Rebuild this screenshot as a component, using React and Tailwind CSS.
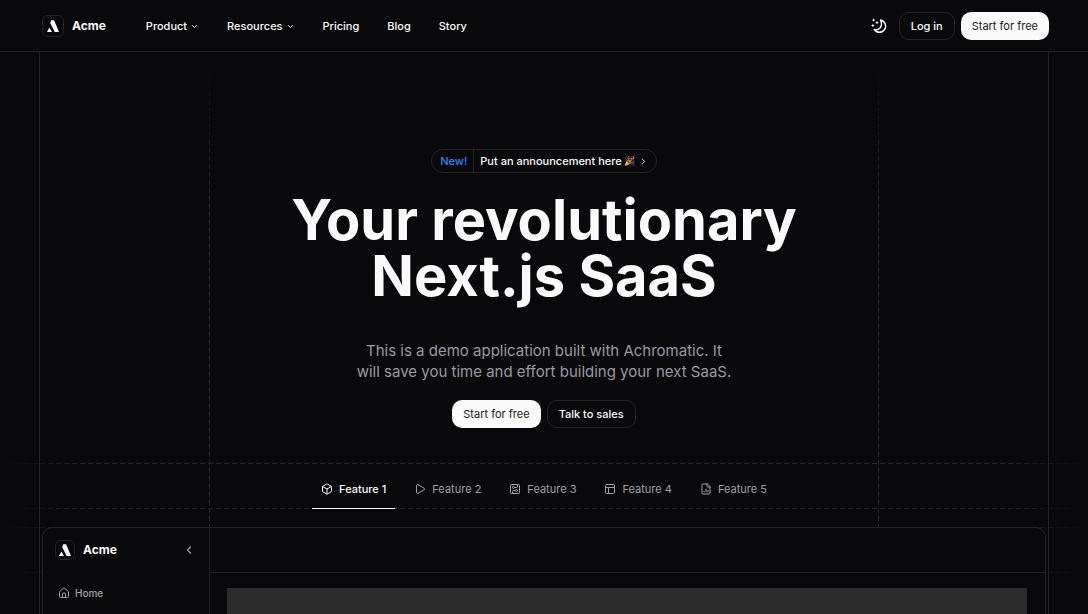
import {
  Box,
  ChevronDown,
  ChevronLeft,
  ChevronRight,
  CircuitBoard,
  FileChartColumn,
  House,
  Layout,
  Play,
} from "lucide-react";

// Navbar links - Section
const navLinks = [
  { label: "Product", hasMenu: true },
  { label: "Resources", hasMenu: true },
  { label: "Pricing" },
  { label: "Blog" },
  { label: "Story" },
];

// Hero tabs - Section
const features = [
  { label: "Feature 1", icon: Box, active: true },
  { label: "Feature 2", icon: Play },
  { label: "Feature 3", icon: CircuitBoard },
  { label: "Feature 4", icon: Layout },
  { label: "Feature 5", icon: FileChartColumn },
];

function Logo({ className }) {
  return (
    <span className="flex items-center">
      <span
        className={`flex items-center justify-center rounded-md border border-[#242427] ${className}`}
      >
        <svg viewBox="0 0 14 14" className="size-[14px]" fill="#fafafa">
          <path d="M5.2 1.2h2.9L13 13H8.7L4.2 4z" />
          <path d="M3.3 8.6 6 13H1z" />
        </svg>
      </span>
      <span className="ml-2 text-xs font-bold">Acme</span>
    </span>
  );
}

// Moon with three stars, toggles the theme
function ThemeIcon() {
  return (
    <svg
      viewBox="0 0 16 16"
      className="size-4"
      fill="none"
      stroke="#fafafa"
      strokeWidth="1.4"
      strokeLinecap="round"
      strokeLinejoin="round"
    >
      <path d="M9.4 2a6.2 6.2 0 1 1-6.2 9.500c3.400.9 6.500-.9 7.100-4 .4-2-.1-4-.9-5.500z" />
      <path strokeWidth="1" d="M2.600 1.200v1.800M1.700 2.100h1.800M1.900 6.600v1.800M1 7.500h1.800M6 3.700v1.800M5.100 4.600h1.800" />
    </svg>
  );
}

// Dashed guide line, fading out at both ends
function DashedLine() {
  return (
    <div className="h-px w-full bg-[repeating-linear-gradient(90deg,#27272a_0_5px,transparent_5px_8px)] [mask-image:linear-gradient(90deg,transparent,black_8%,black_92%,transparent)]" />
  );
}

function Navbar() {
  return (
    <header className="border-b border-[#1f1f22]">
      <div className="mx-[39px] flex h-[51px] items-center pt-px pl-[3px]">
        <a href="#" aria-label="Acme">
          <Logo className="size-[22px]" />
        </a>
        <nav className="ml-10 flex items-center gap-7 text-[11px] leading-4 font-medium">
          {navLinks.map((link) => (
            <a key={link.label} href="#" className="flex items-center gap-[3px]">
              {link.label}
              {link.hasMenu && <ChevronDown size={9} strokeWidth={2.5} />}
            </a>
          ))}
        </nav>
        <div className="ml-auto flex items-center gap-[6px] text-[11px] leading-4">
          <button type="button" aria-label="Toggle theme" className="mr-[6px]">
            <ThemeIcon />
          </button>
          <button type="button" className="h-7 rounded-[10px] border border-[#242427] px-[11px] font-medium">
            Log in
          </button>
          <button type="button" className="h-7 rounded-[10px] bg-[#fafafa] px-[11px] text-[#18181b]">
            Start for free
          </button>
        </div>
      </div>
    </header>
  );
}

function Hero() {
  return (
    <section className="flex flex-col items-center pt-[97px] pb-[35px] text-center">
      <a
        href="#"
        className="flex h-6 items-center rounded-full border border-[#242427] px-2 text-[11px] leading-4 font-medium"
      >
        <span className="text-[#3b82f6]">New!</span>
        <span className="mx-[6px] h-[22px] w-px bg-[#242427]" />
        Put an announcement here
        <span className="ml-[2px] text-[9px]">🎉</span>
        <ChevronRight size={9} strokeWidth={2.5} className="ml-1" />
      </a>
      <h1 className="mt-[19px] text-[56px] leading-[56px] font-bold">
        Your revolutionary
        <br />
        Next.js SaaS
      </h1>
      <p className="mt-9 text-[15px] leading-[21px] text-[#9a9aa2]">
        This is a demo application built with Achromatic. It
        <br />
        will save you time and effort building your next SaaS.
      </p>
      <div className="mt-[18px] flex gap-[6px] text-[11px] leading-4">
        <button type="button" className="h-7 rounded-[10px] bg-[#fafafa] px-[11px] text-[#18181b]">
          Start for free
        </button>
        <button type="button" className="h-7 rounded-[10px] border border-[#242427] px-[11px] font-medium">
          Talk to sales
        </button>
      </div>
    </section>
  );
}

function FeatureTabs() {
  return (
    <>
      <DashedLine />
      <div role="tablist" className="flex h-[44px] justify-center gap-[10px]">
        {features.map(({ label, icon: Icon, active }) => (
          <button
            key={label}
            type="button"
            role="tab"
            aria-selected={Boolean(active)}
            className={`relative flex items-center gap-[6px] px-[9px] pt-[6px] text-[11px] leading-4 ${
              active ? "font-medium text-[#fafafa]" : "text-[#a1a1aa]"
            }`}
          >
            <Icon size={12} />
            {label}
            {active && <span className="absolute inset-x-0 top-full z-10 h-px bg-[#fafafa]" />}
          </button>
        ))}
      </div>
      <DashedLine />
    </>
  );
}

// App window shown under the tabs
function Preview() {
  return (
    <div className="relative mt-[18px] flex-1">
      <DashedLine />
      <div className="mt-[44px]">
        <DashedLine />
      </div>
      <div className="absolute inset-x-[42px] top-0 bottom-0 flex overflow-hidden rounded-t-[10px] border border-b-0 border-[#242427] bg-[#09090b]">
        <aside className="w-[167px] shrink-0 border-r border-[#1f1f22]">
          <div className="flex h-[44px] items-center justify-between pr-[14px] pl-3">
            <Logo className="size-5" />
            <ChevronLeft size={12} strokeWidth={2.5} className="text-[#a1a1aa]" />
          </div>
          <a href="#" className="mt-[13px] ml-[15px] flex items-center gap-[5px] text-[10px] leading-4 font-medium text-[#a1a1aa]">
            <House size={12} />
            Home
          </a>
        </aside>
        <div className="flex flex-1 flex-col">
          <div className="h-[45px] border-b border-[#1f1f22]" />
          <div className="mr-[18px] ml-[17px] mt-[15px] flex-1 bg-[#2b2b2b]" />
        </div>
      </div>
    </div>
  );
}

export default function App() {
  return (
    <div className="flex h-screen flex-col overflow-hidden bg-[#09090b] font-['Inter',sans-serif] text-[#fafafa]">
      <Navbar />
      <main className="relative flex flex-1 flex-col">
        {/* Page guides, solid on the container and dashed inside it */}
        <div className="pointer-events-none absolute inset-x-[39px] inset-y-0 border-x border-[#242427]">
          <div className="mx-[169px] flex h-full justify-between">
            <span className="w-px bg-[repeating-linear-gradient(180deg,#27272a_0_5px,transparent_5px_8px)] [mask-image:linear-gradient(180deg,transparent,black_25%)]" />
            <span className="w-px bg-[repeating-linear-gradient(180deg,#27272a_0_5px,transparent_5px_8px)] [mask-image:linear-gradient(180deg,transparent,black_25%)]" />
          </div>
        </div>
        <Hero />
        <FeatureTabs />
        <Preview />
      </main>
    </div>
  );
}
